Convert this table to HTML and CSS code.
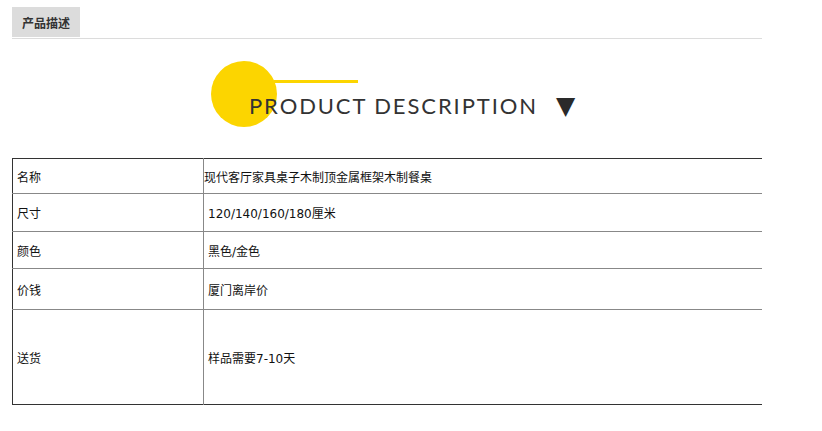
FILE: index.html
```html
<!DOCTYPE html>
<html lang="zh">
<head>
<meta charset="utf-8">
<title>产品描述</title>
<link rel="stylesheet" href="styles.css">
</head>
<body>
<div class="page">
  <div class="tabs">
    <div class="tab">产品描述</div>
  </div>
  <div class="heading">
    <span class="dot"></span>
    <span class="bar"></span>
    <div class="title">PRODUCT DESCRIPTION<span class="arrow">▼</span></div>
  </div>
  <table class="spec">
    <tr class="r1"><td class="k">名称</td><td class="v tight">现代客厅家具桌子木制顶金属框架木制餐桌</td></tr>
    <tr class="r2"><td class="k">尺寸</td><td class="v">120/140/160/180厘米</td></tr>
    <tr class="r3"><td class="k">颜色</td><td class="v">黑色/金色</td></tr>
    <tr class="r4"><td class="k">价钱</td><td class="v">厦门离岸价</td></tr>
    <tr class="r5"><td class="k">送货</td><td class="v">样品需要7-10天</td></tr>
  </table>
</div>
</body>
</html>
```

FILE: styles.css
```css
html, body {
  margin: 0;
  padding: 0;
  background: #fff;
}
.page {
  padding: 7px 0 0 12px;
  width: 750px;
  font-family: "Noto Sans CJK SC", "Liberation Sans", sans-serif;
  color: #222;
}
.tabs {
  border-bottom: 1px solid #dcdcdc;
  padding-bottom: 1px;
  display: flex;
}
.tab {
  width: 68px;
  height: 30px;
  background: #dcdcdc;
  display: flex;
  align-items: center;
  justify-content: center;
  font-size: 12px;
  font-weight: 700;
  color: #333;
}
.heading {
  position: relative;
  height: 119px;
}
.dot {
  position: absolute;
  left: 199px;
  top: 22px;
  width: 66px;
  height: 66px;
  border-radius: 50%;
  background: #fcd500;
}
.bar {
  position: absolute;
  left: 262px;
  top: 41px;
  width: 84px;
  height: 3px;
  background: #fcd500;
}
.title {
  position: relative;
  padding: 54px 0 0 237px;
  font-family: "Lato", "Open Sans", sans-serif;
  font-size: 22px;
  line-height: 26px;
  letter-spacing: 1.9px;
  color: #333;
  white-space: nowrap;
  display: flex;
  align-items: center;
}
.arrow {
  margin-left: 18px;
  font-family: "DejaVu Sans", sans-serif;
  font-size: 25px;
  line-height: 26px;
  letter-spacing: 0;
  color: #2a2a2a;
}
.spec {
  width: 750px;
  border-collapse: collapse;
  border-left: 1px solid #333;
  border-top: 1px solid #333;
  border-bottom: 1px solid #333;
  font-family: "DejaVu Sans", "Noto Sans CJK SC", sans-serif;
  font-size: 12px;
  color: #111;
}
.spec td {
  padding: 0 0 0 4px;
  border-top: 1px solid #888;
  vertical-align: middle;
}
.spec tr.r1 td { border-top: 1px solid #333; height: 34px; }
.spec tr.r2 td { height: 37px; }
.spec tr.r3 td { height: 36px; }
.spec tr.r4 td { height: 40px; }
.spec tr.r5 td { height: 94px; }
.spec .k {
  width: 186px;
  border-right: 1px solid #888;
}
.spec .v {
  padding-left: 4px;
}
.spec .v.tight {
  padding-left: 0;
}
```
